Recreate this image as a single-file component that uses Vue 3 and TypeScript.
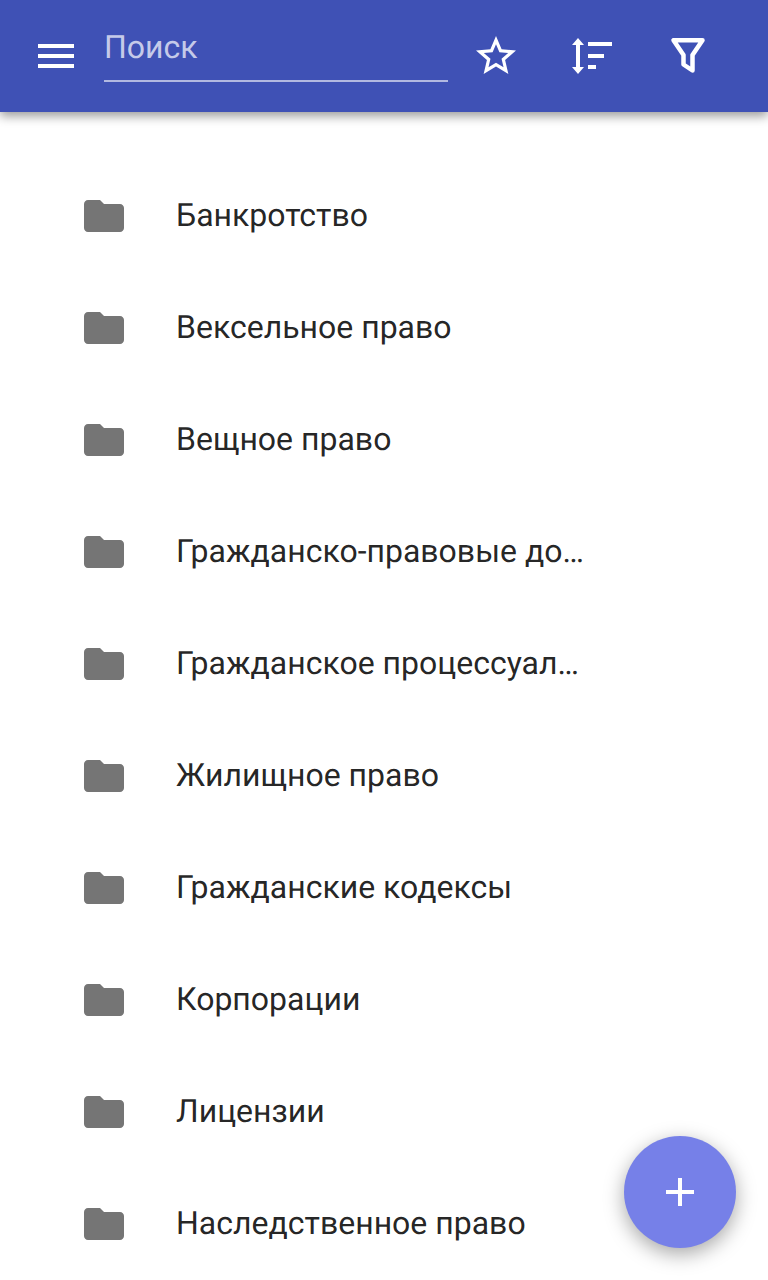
<script setup lang="ts">
const items: string[] = [
  'Банкротство',
  'Вексельное право',
  'Вещное право',
  'Гражданско-правовые до…',
  'Гражданское процессуал…',
  'Жилищное право',
  'Гражданские кодексы',
  'Корпорации',
  'Лицензии',
  'Наследственное право',
]
</script>

<template>
  <div class="app">
    <header class="bar">
      <button class="nav" aria-label="Меню">
        <svg viewBox="0 0 24 24" width="48" height="48"><path fill="#fff" d="M3 18h18v-2H3v2zm0-5h18v-2H3v2zm0-7v2h18V6H3z" /></svg>
      </button>
      <div class="search"><span class="placeholder">Поиск</span></div>
      <div class="actions">
        <button class="act" aria-label="Избранное">
          <svg viewBox="0 0 24 24" width="48" height="48"><path fill="#fff" d="M22 9.24l-7.19-.62L12 2 9.19 8.63 2 9.24l5.46 4.73L5.82 21 12 17.27 18.18 21l-1.63-7.03L22 9.24zM12 15.4l-3.76 2.27 1-4.28-3.32-2.88 4.38-.38L12 6.1l1.71 4.04 4.38.38-3.32 2.88 1 4.28L12 15.4z" /></svg>
        </button>
        <button class="act" aria-label="Сортировка">
          <svg viewBox="0 0 48 48" width="48" height="48"><path fill="#fff" d="M10 6l6 7h-4v22h4l-6 7-6-7h4V13H4zM20 10h24v4H20zM20 22h16v4H20zM20 33h8v4H20z" /></svg>
        </button>
        <button class="act" aria-label="Фильтр">
          <svg viewBox="0 0 48 48" width="48" height="48"><path fill="none" stroke="#fff" stroke-width="4.5" stroke-linejoin="round" d="M9.500 8.200h29L28.500 23v15.500l-9-6V23z" /></svg>
        </button>
      </div>
    </header>
    <ul class="list">
      <li v-for="item in items" :key="item" class="row">
        <svg class="folder" viewBox="0 0 24 24" width="48" height="48"><path fill="#757575" d="M10 4H4c-1.1 0-1.99.9-1.99 2L2 18c0 1.1.9 2 2 2h16c1.1 0 2-.9 2-2V8c0-1.1-.9-2-2-2h-8l-2-2z" /></svg>
        <span class="label">{{ item }}</span>
      </li>
    </ul>
    <button class="fab" aria-label="Добавить">
      <svg viewBox="0 0 28 28" width="28" height="28"><path fill="#fff" d="M12 0h4v12h12v4H16v12h-4V16H0v-4h12z" /></svg>
    </button>
  </div>
</template>

<style scoped>
.app {
  position: relative;
  width: 768px;
  height: 1280px;
  overflow: hidden;
  background: #fff;
  font-family: Roboto, sans-serif;
  text-rendering: geometricPrecision;
}
button {
  border: 0;
  padding: 0;
  background: none;
  display: flex;
  align-items: center;
  justify-content: center;
}
.bar {
  height: 112px;
  display: flex;
  align-items: center;
  background: #3f51b5;
  box-shadow: 0 4px 10px rgba(0, 0, 0, 0.4);
  position: relative;
}
.nav {
  width: 104px;
  height: 112px;
  padding-left: 32px;
  justify-content: flex-start;
  box-sizing: border-box;
}
.search {
  width: 344px;
  height: 82px;
  box-sizing: border-box;
  border-bottom: 2px solid #b2b9e1;
  align-self: flex-start;
}
.placeholder {
  display: block;
  font-size: 32px;
  line-height: 94px;
  color: #c5cae9;
}
.actions {
  display: flex;
}
.act {
  width: 96px;
  height: 112px;
}
.list {
  list-style: none;
  margin: 0;
  padding: 48px 0 0;
}
.row {
  height: 112px;
  display: flex;
  align-items: center;
  padding-left: 80px;
}
.label {
  margin-left: 48px;
  margin-top: -2px;
  font-size: 32px;
  color: rgba(0, 0, 0, 0.87);
  white-space: nowrap;
}
.fab {
  position: absolute;
  left: 624px;
  top: 1136px;
  width: 112px;
  height: 112px;
  border-radius: 50%;
  background: #7680e8;
  box-shadow: 0 6px 20px rgba(0, 0, 0, 0.35);
}
</style>
